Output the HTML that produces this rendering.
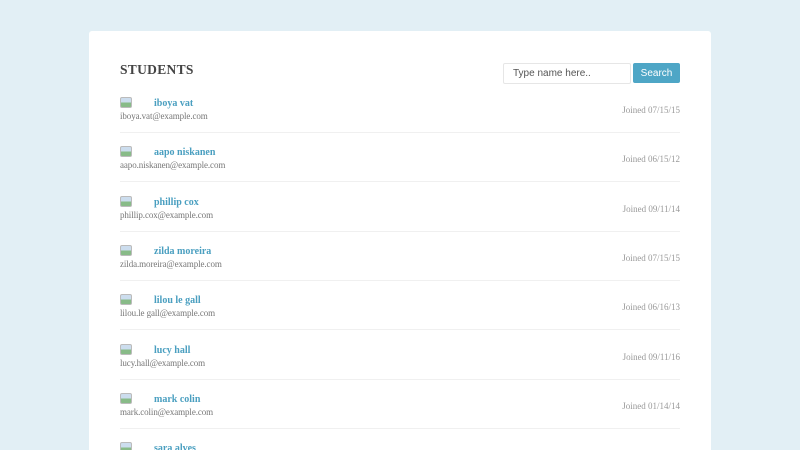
<!DOCTYPE html>
<html><head><style>
html,body{margin:0;background:#e2eff5;width:800px;height:450px;overflow:hidden;font-family:"Liberation Serif",serif;}
.card{position:absolute;left:89px;top:31px;width:622px;height:419px;background:#fff;border-radius:3px 3px 0 0;overflow:hidden;}
h1{position:absolute;left:31px;top:31px;margin:0;font-size:13.5px;line-height:16px;font-weight:bold;color:#444;letter-spacing:0.3px;}
.inp{position:absolute;left:414px;top:32px;width:128px;border:1px solid #e6e6e6;border-radius:2px;font-family:"Liberation Sans",sans-serif;font-size:10px;color:#555;line-height:19px;padding-left:9px;box-sizing:border-box;height:21px;}
.btn{position:absolute;left:544px;top:32px;width:47px;height:20px;background:#4ea6c6;border-radius:2px;color:#fff;font-family:"Liberation Sans",sans-serif;font-size:10px;line-height:21px;text-align:center;}
.row{position:absolute;left:31px;width:560px;height:35px;border-bottom:1px solid #f0f0f0;}
.ic{position:absolute;left:0;top:0;width:10px;height:9px;border:1px solid #bbb;border-radius:2px;background:linear-gradient(#cde 50%,#8b8 50%);}
.nm{position:absolute;left:34px;top:0;font-size:10px;line-height:13px;font-weight:bold;color:#4a9fc0;}
.em{position:absolute;left:0;top:13px;font-size:9px;line-height:12px;color:#777;letter-spacing:-0.1px;}
.dt{position:absolute;right:0;top:7px;font-size:9px;line-height:12px;color:#999;}
</style></head><body>
<div class="card">
<h1>STUDENTS</h1>
<div class="inp">Type name here..</div>
<div class="btn">Search</div>
<div class="row" style="top:66px"><div class="ic"></div><div class="nm">iboya vat</div><div class="em">iboya.vat@example.com</div><div class="dt">Joined 07/15/15</div></div>
<div class="row" style="top:115px"><div class="ic"></div><div class="nm">aapo niskanen</div><div class="em">aapo.niskanen@example.com</div><div class="dt">Joined 06/15/12</div></div>
<div class="row" style="top:165px"><div class="ic"></div><div class="nm">phillip cox</div><div class="em">phillip.cox@example.com</div><div class="dt">Joined 09/11/14</div></div>
<div class="row" style="top:214px"><div class="ic"></div><div class="nm">zilda moreira</div><div class="em">zilda.moreira@example.com</div><div class="dt">Joined 07/15/15</div></div>
<div class="row" style="top:263px"><div class="ic"></div><div class="nm">lilou le gall</div><div class="em">lilou.le gall@example.com</div><div class="dt">Joined 06/16/13</div></div>
<div class="row" style="top:313px"><div class="ic"></div><div class="nm">lucy hall</div><div class="em">lucy.hall@example.com</div><div class="dt">Joined 09/11/16</div></div>
<div class="row" style="top:362px"><div class="ic"></div><div class="nm">mark colin</div><div class="em">mark.colin@example.com</div><div class="dt">Joined 01/14/14</div></div>
<div class="row" style="top:411px"><div class="ic"></div><div class="nm">sara alves</div></div>
</div>
</body></html>
